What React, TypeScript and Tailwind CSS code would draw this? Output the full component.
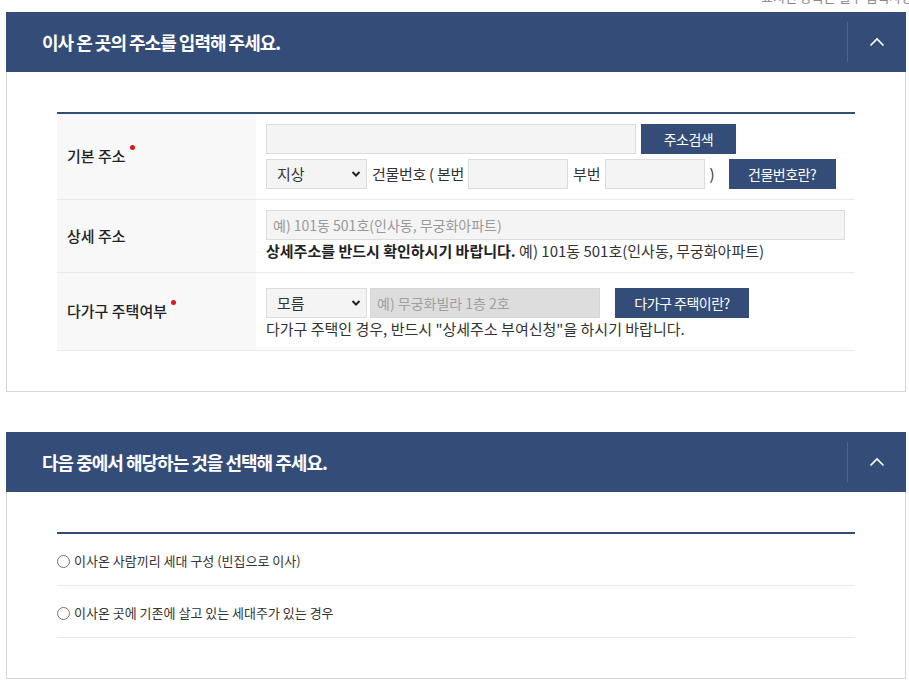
import React from "react";

const FONT = "font-['Noto_Sans_CJK_KR','Noto_Sans',sans-serif]";

function Chevron() {
  return (
    <svg width="16" height="10" viewBox="0 0 16 10" fill="none">
      <path d="M1.5 8.5 L8 2 L14.5 8.5" stroke="#ffffff" strokeWidth="1.6" />
    </svg>
  );
}

function PanelHeader({ title }: { title: string }) {
  return (
    <div className="h-[60px] bg-[#344c78] flex items-center">
      <h2 className="flex-1 pl-[36px] text-white text-[18px] font-bold tracking-[-1px] leading-none">
        {title}
      </h2>
      <div className="w-px h-[40px] bg-[#4b6390]" />
      <div className="w-[58px] flex justify-center items-center">
        <Chevron />
      </div>
    </div>
  );
}

function SelectBox({ value }: { value: string }) {
  return (
    <div className="relative w-[101px] h-[30px] shrink-0">
      <select
        defaultValue={value}
        className="appearance-none w-full h-full bg-[#f4f4f4] border border-[#dcdcdc] pl-[10px] text-[15px] text-[#333] outline-none"
      >
        <option>{value}</option>
      </select>
      <svg
        className="absolute right-[6px] top-[11px] pointer-events-none"
        width="10"
        height="8"
        viewBox="0 0 10 8"
        fill="none"
      >
        <path d="M1.5 2 L5 5.5 L8.5 2" stroke="#222" strokeWidth="2" />
      </svg>
    </div>
  );
}

function Btn({ label, w }: { label: string; w: string }) {
  return (
    <button
      className={`${w} h-[30px] bg-[#344c78] text-white text-[14px] tracking-[-0.5px] flex items-center justify-center shrink-0`}
    >
      {label}
    </button>
  );
}

function Dot() {
  return (
    <span className="inline-block w-[5px] h-[5px] rounded-full bg-[#e0141e] ml-[4px] relative -top-[9px]" />
  );
}

function Radio({ label }: { label: string }) {
  return (
    <div className="flex items-center border-b border-[#e9e9e9] h-[52px] pt-[3px]">
      <span className="w-[13px] h-[13px] rounded-full border border-[#767676] bg-white" />
      <span className="ml-[4px] text-[13px] text-[#333]">{label}</span>
    </div>
  );
}

export default function App() {
  return (
    <div className={`w-[909px] h-[682px] bg-white overflow-hidden ${FONT}`}>
      <div className="h-[12px] overflow-hidden">
        <p className="pl-[752px] -mt-[11px] text-[13px] leading-[16px] text-[#888] whitespace-nowrap">
          * 표시된 항목은 필수 입력사항입니다.
        </p>
      </div>

      {/* Panel 1 */}
      <section className="ml-[6px] w-[900px]">
        <PanelHeader title="이사 온 곳의 주소를 입력해 주세요." />
        <div className="border border-t-0 border-[#d6d6d6] pt-[40px] pb-[40px] px-[50px]">
          <div className="border-t-2 border-[#344c78] w-[798px]">
            {/* Row 1 */}
            <div className="flex border-b border-[#e9e9e9] h-[86px]">
              <div className="w-[199px] bg-[#f8f8f8] flex items-center pl-[10px] text-[15px] text-[#222] font-medium">
                기본 주소
                <Dot />
              </div>
              <div className="flex-1 pl-[10px] pt-[10px] flex flex-col gap-[5px] text-[15px] text-[#333]">
                <div className="flex items-center">
                  <input className="w-[370px] h-[30px] bg-[#f4f4f4] border border-[#dcdcdc] outline-none" />
                  <div className="ml-[5px]">
                    <Btn label="주소검색" w="w-[95px]" />
                  </div>
                </div>
                <div className="flex items-center whitespace-nowrap">
                  <SelectBox value="지상" />
                  <span className="ml-[5px] tracking-[-0.3px]">건물번호 ( 본번</span>
                  <input className="ml-[4px] w-[100px] h-[30px] bg-[#f4f4f4] border border-[#dcdcdc] outline-none shrink-0" />
                  <span className="ml-[5px]">부번</span>
                  <input className="ml-[4px] w-[100px] h-[30px] bg-[#f4f4f4] border border-[#dcdcdc] outline-none shrink-0" />
                  <span className="ml-[5px]">)</span>
                  <div className="ml-[14px]">
                    <Btn label="건물번호란?" w="w-[107px]" />
                  </div>
                </div>
              </div>
            </div>
            {/* Row 2 */}
            <div className="flex border-b border-[#e9e9e9] h-[73px]">
              <div className="w-[199px] bg-[#f8f8f8] flex items-center pl-[10px] text-[15px] text-[#222] font-medium">
                상세 주소
              </div>
              <div className="flex-1 pl-[10px] pt-[10px] text-[15px] text-[#333]">
                <input
                  placeholder="예) 101동 501호(인사동, 무궁화아파트)"
                  className="w-[579px] h-[30px] bg-[#f4f4f4] border border-[#dcdcdc] px-[6px] text-[14px] placeholder:text-[#999] outline-none"
                />
                <p className="leading-[22px] whitespace-nowrap">
                  <span className="font-bold text-[#222]">상세주소를 반드시 확인하시기 바랍니다.</span>{" "}
                  예) 101동 501호(인사동, 무궁화아파트)
                </p>
              </div>
            </div>
            {/* Row 3 */}
            <div className="flex border-b border-[#e9e9e9] h-[78px]">
              <div className="w-[199px] bg-[#f8f8f8] flex items-center pl-[10px] text-[15px] text-[#222] font-medium">
                다가구 주택여부
                <Dot />
              </div>
              <div className="flex-1 pl-[10px] pt-[15px] text-[15px] text-[#333]">
                <div className="flex items-center">
                  <SelectBox value="모름" />
                  <input
                    disabled
                    placeholder="예) 무궁화빌라 1층 2호"
                    className="ml-[3px] w-[230px] h-[30px] bg-[#dddddd] border border-[#d6d6d6] px-[6px] text-[14px] placeholder:text-[#a0a0a0] outline-none"
                  />
                  <div className="ml-[15px]">
                    <Btn label="다가구 주택이란?" w="w-[134px]" />
                  </div>
                </div>
                <p className="leading-[22px] whitespace-nowrap">
                  다가구 주택인 경우, 반드시 "상세주소 부여신청"을 하시기 바랍니다.
                </p>
              </div>
            </div>
          </div>
        </div>
      </section>

      {/* Panel 2 */}
      <section className="ml-[6px] w-[900px] mt-[40px]">
        <PanelHeader title="다음 중에서 해당하는 것을 선택해 주세요." />
        <div className="border border-t-0 border-[#d6d6d6] pt-[40px] pb-[40px] px-[50px]">
          <div className="border-t-2 border-[#344c78] w-[798px]">
            <Radio label="이사온 사람끼리 세대 구성 (빈집으로 이사)" />
            <Radio label="이사온 곳에 기존에 살고 있는 세대주가 있는 경우" />
          </div>
        </div>
      </section>
    </div>
  );
}
